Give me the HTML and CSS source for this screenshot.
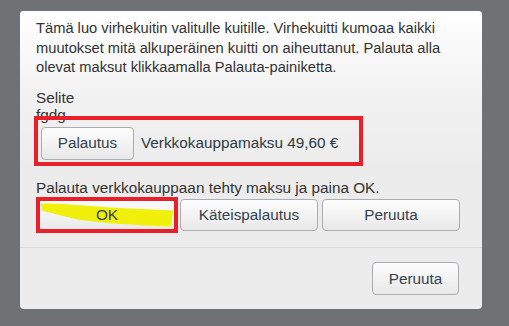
FILE: index.html
```html
<!DOCTYPE html>
<html lang="fi">
<head>
<meta charset="utf-8">
<title>Palautus</title>
<link rel="stylesheet" href="styles.css">
</head>
<body>
<div class="dialog">
  <div class="dialog-body">
    <p class="intro">Tämä luo virhekuitin valitulle kuitille. Virhekuitti kumoaa kaikki muutokset mitä alkuperäinen kuitti on aiheuttanut. Palauta alla olevat maksut klikkaamalla Palauta-painiketta.</p>
    <div class="selite">
      <div class="label">Selite</div>
      <div class="value">fgdg</div>
    </div>
    <div class="payment-row">
      <button class="btn btn-palautus">Palautus</button>
      <span class="payment-text">Verkkokauppamaksu 49,60 €</span>
      <div class="mark mark-payment"></div>
    </div>
    <p class="instruction">Palauta verkkokauppaan tehty maksu ja paina OK.</p>
    <div class="action-row">
      <button class="btn btn-action btn-ok">
        <svg class="highlight" viewBox="0 0 140 34" preserveAspectRatio="none" aria-hidden="true">
          <path d="M2 4 C20 3 60 8 100 10 L138 12 L136 30 C110 29 70 27 40 22 C25 19 10 14 3 12 Z" fill="#f0f00c"/>
        </svg>
        <span class="btn-label">OK</span>
        <div class="mark mark-ok"></div>
      </button>
      <button class="btn btn-action">Käteispalautus</button>
      <button class="btn btn-action">Peruuta</button>
    </div>
  </div>
  <div class="dialog-footer">
    <button class="btn btn-footer">Peruuta</button>
  </div>
</div>
</body>
</html>
```
FILE: styles.css
```css
html, body {
  margin: 0;
  padding: 0;
}
body {
  background: #6e7275;
  width: 509px;
  height: 326px;
  overflow: hidden;
  font-family: "Liberation Sans", Arial, sans-serif;
  font-size: 15.3px;
  color: #333;
}
.dialog {
  margin: 11px 0 0 20px;
  width: 462px;
  height: 298px;
  border-radius: 4px;
  background: #ececec;
  display: flex;
  flex-direction: column;
  overflow: hidden;
}
.dialog-body {
  background: linear-gradient(#ffffff 0px, #f1f1f1 90px, #ececec 160px);
  padding: 8px 16px 0 16px;
  height: 236px;
  box-sizing: border-box;
  position: relative;
}
.intro {
  margin: 0;
  font-size: 14.7px;
  line-height: 19.5px;
}
.selite {
  margin-top: 11px;
  line-height: 17px;
}
.payment-row {
  position: relative;
  display: flex;
  align-items: center;
  gap: 7px;
  margin-top: 4px;
  padding-left: 5px;
}
.payment-text {
  color: #2e3a44;
}
.instruction {
  margin: 19px 0 0 0;
  line-height: 17px;
}
.action-row {
  display: flex;
  gap: 4px;
  margin: 3px 0 0 2px;
  width: 422px;
}
.btn {
  font-family: "Liberation Sans", Arial, sans-serif;
  font-size: 15.3px;
  color: #36424c;
  background: linear-gradient(#fdfdfd, #e8e8e9);
  border: 1px solid #a9adb1;
  border-radius: 4px;
  padding: 0;
  box-sizing: border-box;
}
.btn-palautus {
  width: 93px;
  height: 33px;
}
.btn-action {
  flex: 1;
  height: 32px;
}
.btn-ok {
  position: relative;
}
.btn-label {
  position: relative;
}
.highlight {
  position: absolute;
  left: 0;
  top: 0;
  width: 100%;
  height: 100%;
}
.mark {
  position: absolute;
  border: 4px solid #e8202a;
  box-sizing: border-box;
  pointer-events: none;
}
.mark-payment {
  left: -2px;
  top: -11px;
  width: 329px;
  height: 50px;
}
.mark-ok {
  left: -3px;
  top: -3px;
  right: -3px;
  bottom: -3px;
}
.dialog-footer {
  flex: 1;
  border-top: 1px solid #dcdcdc;
  display: flex;
  justify-content: flex-end;
  align-items: center;
  padding-right: 23px;
}
.btn-footer {
  width: 87px;
  height: 33px;
}
```
